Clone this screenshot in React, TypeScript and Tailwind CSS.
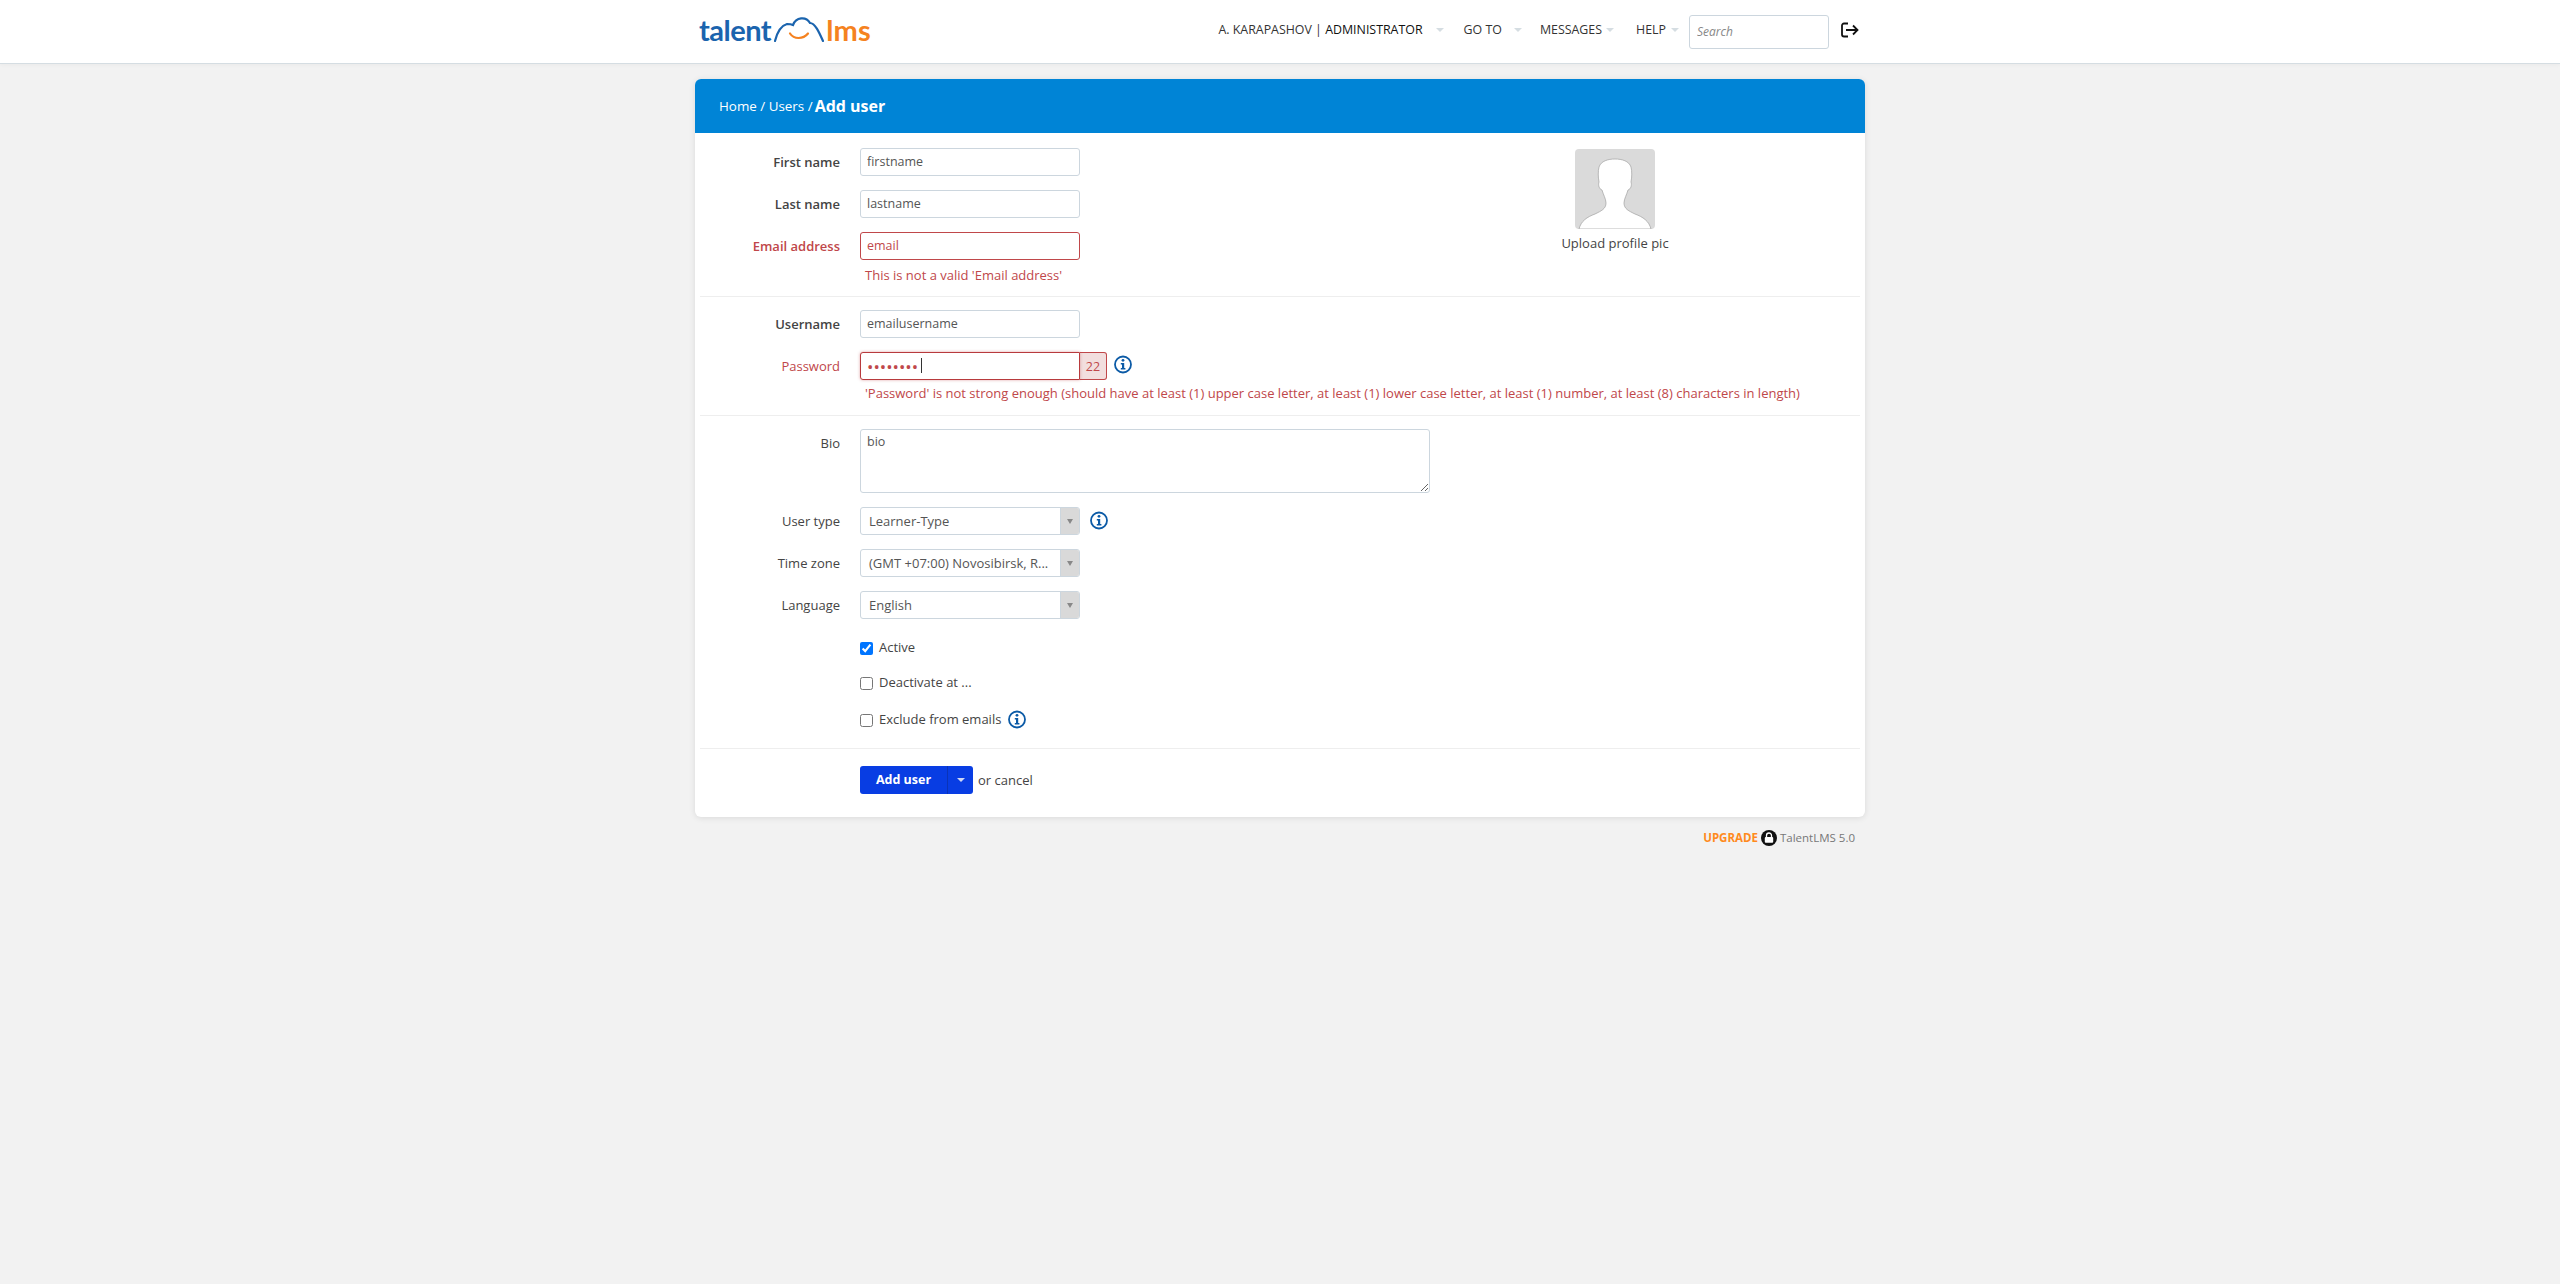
import React from "react";

const Info = ({ className = "" }: { className?: string }) => (
  <svg width="18" height="19" viewBox="0 0 18 19" className={className}>
    <circle cx="9" cy="9.5" r="8" fill="white" stroke="#0b5aa6" strokeWidth="1.8" />
    <circle cx="9" cy="5.3" r="1.4" fill="#0b5aa6" />
    <path d="M6.8 8h3.4v5h1.2v1.4H6.8V13H8V9.4H6.8z" fill="#0b5aa6" />
  </svg>
);

const Caret = ({ className = "" }: { className?: string }) => (
  <span className={"inline-block w-0 h-0 border-x-[4px] border-x-transparent border-t-[4px] border-t-[#d5dde2] " + className} />
);

const Label = ({ children, error, strong }: { children: React.ReactNode; error?: boolean; strong?: boolean }) => (
  <label className={"w-[145px] shrink-0 text-right text-[13px] leading-[28px] " + (error ? "text-[#c0474a] " : "text-[#444] ") + (strong ? "font-semibold" : "")}>
    {children}
  </label>
);

const Field = ({ value, error }: { value: string; error?: boolean }) => (
  <input
    readOnly
    defaultValue={value}
    className={"w-[220px] h-[28px] rounded-[3px] bg-white border px-[6px] pb-[2px] text-[12.5px] outline-none " + (error ? "border-[#c0474a] text-[#c0474a]" : "border-[#ccd6de] text-[#555]")}
  />
);

const Select = ({ value }: { value: string }) => (
  <div className="w-[220px] h-[28px] rounded-[3px] bg-white border border-[#ccd6de] flex overflow-hidden">
    <span className="flex-1 pl-[8px] text-[13px] leading-[26px] text-[#555] whitespace-nowrap overflow-hidden">{value}</span>
    <span className="w-[19px] bg-[#d9d9d9] border-l border-[#ccd6de] flex items-center justify-center">
      <span className="w-0 h-0 border-x-[3px] border-x-transparent border-t-[5px] border-t-[#888]" />
    </span>
  </div>
);

const Row = ({ children, className = "" }: { children: React.ReactNode; className?: string }) => (
  <div className={"flex gap-[20px] " + className}>{children}</div>
);

const Hr = () => <div className="h-px bg-[#eeeeee] mx-[5px]" />;

const Logo = () => (
  <div className="flex items-end h-[26px] mt-[-3px] text-[29px] leading-[26px] font-bold tracking-[-0.5px]" style={{ fontFamily: "Lato, sans-serif" }}>
    <span className="text-[#1b64ae]">talent</span>
    <svg width="50" height="26" viewBox="0 0 50 26" className="ml-[3px] mr-[2px] mb-[1px]" fill="none">
      <path d="M1 25C3 17 6 10 13 8c2 0 4 0 6 1C22 1 32 0 36 7c5 0 9 9 13 18" stroke="#1b64ae" strokeWidth="2.2" strokeLinecap="round" />
      <path d="M16 17.500c4 6 13 6 18 0" stroke="#f58220" strokeWidth="2.2" strokeLinecap="round" />
    </svg>
    <span className="text-[#f58220] tracking-[0.2px]">lms</span>
  </div>
);

export default function App() {
  return (
    <div className="min-h-screen bg-[#f2f2f2] text-[13px]" style={{ fontFamily: '"Open Sans", sans-serif' }}>
      <header className="h-[64px] bg-white border-b border-[#d5dde2] shadow-[0_1px_4px_rgba(0,0,0,0.04)]">
        <div className="w-[1170px] mx-auto h-full flex items-center pl-[4px] pr-[6px] justify-between">
          <Logo />
          <nav className="flex items-center text-[12.4px] text-[#333] h-full uppercase whitespace-nowrap">
            <span className="mb-[3px]">A. Karapashov | <span className="text-[#111]">Administrator</span></span>
            <Caret className="ml-[13px] mb-[3px]" />
            <span className="ml-[20px] mb-[3px]">Go to</span>
            <Caret className="ml-[12px] mb-[3px]" />
            <span className="ml-[18px] mb-[3px]">Messages</span>
            <Caret className="ml-[4px] mb-[3px]" />
            <span className="ml-[22px] mb-[3px]">Help</span>
            <Caret className="ml-[5px] mb-[3px]" />
            <input
              readOnly
              placeholder="Search"
              className="ml-[10px] w-[140px] h-[34px] rounded-[3px] border border-[#ccd6de] bg-white px-[7px] text-[12px] italic normal-case outline-none placeholder:text-[#888]"
            />
            <svg width="18" height="16" viewBox="0 0 18 16" className="ml-[12px] mb-[4px]" fill="none" stroke="#111" strokeWidth="1.8">
              <path d="M7 1.500H3a2 2 0 0 0-2 2v9a2 2 0 0 0 2 2h4" />
              <path d="M5 8h11M12 3.500 16.500 8 12 12.500" />
            </svg>
          </nav>
        </div>
      </header>

      <main className="w-[1170px] mx-auto pt-[15px]">
        <section className="rounded-[6px] bg-white shadow-[0_1px_6px_rgba(0,0,0,0.1)] overflow-hidden">
          <div className="h-[54px] bg-[#0084d6] flex items-center pl-[24px] text-white whitespace-nowrap">
            <span className="text-[13.400px]">Home / Users / </span>
            <span className="text-[16px] font-bold ml-[2px]">Add user</span>
          </div>

          <div className="relative h-[163px] pt-[15px]">
            <Row><Label strong>First name</Label><Field value="firstname" /></Row>
            <Row className="mt-[14px]"><Label strong>Last name</Label><Field value="lastname" /></Row>
            <Row className="mt-[14px]"><Label strong error>Email address</Label><Field value="email" error /></Row>
            <div className="ml-[170px] mt-[5px] text-[13px] leading-[20px] text-[#c0474a]">This is not a valid 'Email address'</div>
            <div className="absolute right-[190px] top-[16px] w-[120px] flex flex-col items-center">
              <svg width="80" height="80" viewBox="0 0 80 80" className="rounded-[4px] bg-[#dadada]">
                <path d="M4 80C6 72 12 68 20 65c6-3 11-5 11-11 0-4-3-9-4-13-3-1-4-5-3-8-1-5-1-11 0-15 2-6 9-8 16-8s14 2 16 8c1 4 1 10 0 15 1 3 0 7-3 8-1 4-4 9-4 13 0 6 5 8 11 11 8 3 14 7 16 15z" fill="#fff" stroke="#aaa" strokeWidth="0.8" />
              </svg>
              <span className="mt-[4px] text-[13px] leading-[20px] text-[#444] whitespace-nowrap">Upload profile pic</span>
            </div>
          </div>
          <Hr />

          <div className="h-[118px] pt-[13px]">
            <Row><Label strong>Username</Label><Field value="emailusername" /></Row>
            <Row className="mt-[14px]">
              <Label error>Password</Label>
              <div className="flex items-center">
                <div className="relative">
                  <input
                    readOnly
                    type="password"
                    defaultValue="password"
                    className="block w-[220px] h-[28px] rounded-l-[3px] bg-white border border-[#b83a3d] shadow-[0_0_3px_rgba(192,71,74,0.5)] px-[6px] text-[17px] text-[#c0474a] outline-none"
                  />
                  <span className="absolute left-[61px] top-[6px] w-px h-[15px] bg-[#333]" />
                </div>
                <span className="w-[27px] h-[28px] rounded-r-[3px] border border-l-0 border-[#c0474a] bg-[#f2dede] text-center text-[12.500px] leading-[28px] text-[#c0474a]">22</span>
                <Info className="ml-[7px] mb-[3px]" />
              </div>
            </Row>
            <div className="ml-[170px] mt-[4px] text-[13px] leading-[19px] text-[#c0474a] whitespace-nowrap">
              'Password' is not strong enough (should have at least (1) upper case letter, at least (1) lower case letter, at least (1) number, at least (8) characters in length)
            </div>
          </div>
          <Hr />

          <div className="h-[332px] pt-[13px]">
            <Row>
              <Label>Bio</Label>
              <textarea
                readOnly
                defaultValue="bio"
                className="block w-[570px] h-[64px] rounded-[3px] border border-[#ccd6de] bg-white px-[6px] py-[3px] text-[12.500px] text-[#555] outline-none"
              />
            </Row>
            <Row className="mt-[14px]">
              <Label>User type</Label>
              <div className="flex items-center">
                <Select value="Learner-Type" />
                <Info className="ml-[10px] mb-[2px]" />
              </div>
            </Row>
            <Row className="mt-[14px]"><Label>Time zone</Label><Select value="(GMT +07:00) Novosibirsk, R..." /></Row>
            <Row className="mt-[14px]"><Label>Language</Label><Select value="English" /></Row>
            <div className="ml-[165px] mt-[23px] flex items-center h-[13px] text-[13px] text-[#444]">
              <input type="checkbox" defaultChecked className="m-0 w-[13px] h-[13px]" />
              <span className="ml-[6px] mb-[2px]">Active</span>
            </div>
            <div className="ml-[165px] mt-[22px] flex items-center h-[13px] text-[13px] text-[#444]">
              <input type="checkbox" className="m-0 w-[13px] h-[13px]" />
              <span className="ml-[6px] mb-[2px]">Deactivate at ...</span>
            </div>
            <div className="ml-[165px] mt-[24px] flex items-center h-[13px] text-[13px] text-[#444]">
              <input type="checkbox" className="m-0 w-[13px] h-[13px]" />
              <span className="ml-[6px] mb-[2px]">Exclude from emails</span>
              <Info className="ml-[7px] mb-[2px]" />
            </div>
          </div>
          <Hr />

          <div className="h-[68px] pt-[17px] pl-[165px] flex items-start">
            <div className="flex h-[28px] rounded-[3px] bg-[#083de3] text-white overflow-hidden">
              <span className="w-[87px] text-center text-[12.5px] font-bold leading-[27px]">Add user</span>
              <span className="w-[26px] border-l border-[#0a33b8] flex items-center justify-center">
                <span className="w-0 h-0 border-x-[4px] border-x-transparent border-t-[4px] border-t-[#cfd8f5]" />
              </span>
            </div>
            <span className="ml-[5px] text-[13px] leading-[28px] text-[#444]">or cancel</span>
          </div>
        </section>

        <footer className="flex items-center justify-end h-[24px] mt-[9px] pr-[10px] text-[11.5px] whitespace-nowrap">
          <span className="font-bold text-[#ff8a1d]">UPGRADE</span>
          <svg width="16" height="16" viewBox="0 0 16 16" className="mx-[3px]">
            <circle cx="8" cy="8" r="8" fill="#111" />
            <rect x="3.800" y="7" width="8.400" height="5.800" rx="1" fill="#fff" />
            <path d="M5.500 7V5.500a2.500 2.500 0 0 1 5 0V7" fill="none" stroke="#fff" strokeWidth="1.300" />
          </svg>
          <span className="text-[#777]">TalentLMS 5.0</span>
        </footer>
      </main>
    </div>
  );
}
